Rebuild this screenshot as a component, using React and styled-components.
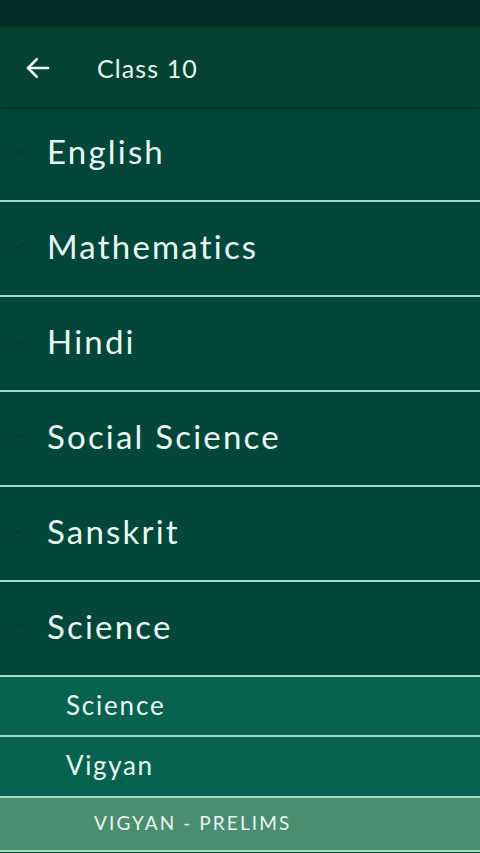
import React from "react";
import styled, { createGlobalStyle } from "styled-components";

const Global = createGlobalStyle`
  html, body {
    margin: 0;
    padding: 0;
    background: #03463a;
  }
  * { box-sizing: border-box; }
`;

const Screen = styled.div`
  width: 480px;
  height: 853px;
  overflow: hidden;
  display: flex;
  flex-direction: column;
  background: #03463a;
  font-family: Lato, "Open Sans", sans-serif;
  color: #e6f7f0;
`;

const StatusBar = styled.div`
  height: 29px;
  flex-shrink: 0;
  background: linear-gradient(#002b26 0%, #002b26 70%, #012b20 85%, #0b3f33 100%);
`;

const Header = styled.div`
  height: 78px;
  flex-shrink: 0;
  display: flex;
  align-items: center;
  padding-left: 23px;
  gap: 44px;
  background: #054232;
  box-shadow: 0 2px 3px rgba(0, 20, 15, 0.45);
  position: relative;
  z-index: 1;
`;

const Title = styled.div`
  font-size: 25px;
  letter-spacing: 1.1px;
  color: #e4f6ee;
`;

const Row = styled.div`
  height: 95px;
  flex-shrink: 0;
  display: flex;
  align-items: center;
  padding: 0 0 5px 10px;
  gap: 19px;
  border-bottom: 2px solid #a4dcc6;
  background: #03463a;
`;

const RowLabel = styled.div`
  font-size: 33px;
  letter-spacing: 2.2px;
  color: #eaf8f2;
`;

const SubRow = styled.div`
  height: ${({ $h }) => $h}px;
  flex-shrink: 0;
  display: flex;
  align-items: center;
  padding: 0 0 3px ${({ $indent }) => $indent}px;
  border-bottom: 2px solid #a4dcc6;
  background: ${({ $bg }) => $bg};
`;

const SubLabel = styled.div`
  font-size: ${({ $size }) => $size}px;
  letter-spacing: ${({ $ls }) => $ls}px;
  color: #e8f7f1;
`;

const Chevron = () => (
  <svg width="18" height="18" viewBox="0 0 24 24" fill="none" stroke="#0d3a30" strokeWidth="2" strokeLinecap="round" strokeLinejoin="round">
    <path d="M6 9l6 6 6-6" />
  </svg>
);

const BackArrow = () => (
  <svg width="30" height="30" viewBox="0 0 24 24" fill="none" stroke="#e8f7f1" strokeWidth="2.1" strokeLinecap="round" strokeLinejoin="round">
    <path d="M20 12H4" />
    <path d="M11 19l-7-7 7-7" />
  </svg>
);

const subjects = ["English", "Mathematics", "Hindi", "Social Science", "Sanskrit", "Science"];

export default function App() {
  return (
    <Screen>
      <Global />
      <StatusBar />
      <Header>
        <BackArrow />
        <Title>Class 10</Title>
      </Header>
      {subjects.map((s) => (
        <Row key={s}>
          <Chevron />
          <RowLabel>{s}</RowLabel>
        </Row>
      ))}
      <SubRow $h={60} $indent={66} $bg="#07634f">
        <SubLabel $size={26} $ls={1.8}>Science</SubLabel>
      </SubRow>
      <SubRow $h={61} $indent={66} $bg="#07634f">
        <SubLabel $size={26} $ls={1.6}>Vigyan</SubLabel>
      </SubRow>
      <SubRow $h={54} $indent={94} $bg="#4a8d70">
        <SubLabel $size={19} $ls={2.1}>VIGYAN - PRELIMS</SubLabel>
      </SubRow>
    </Screen>
  );
}
